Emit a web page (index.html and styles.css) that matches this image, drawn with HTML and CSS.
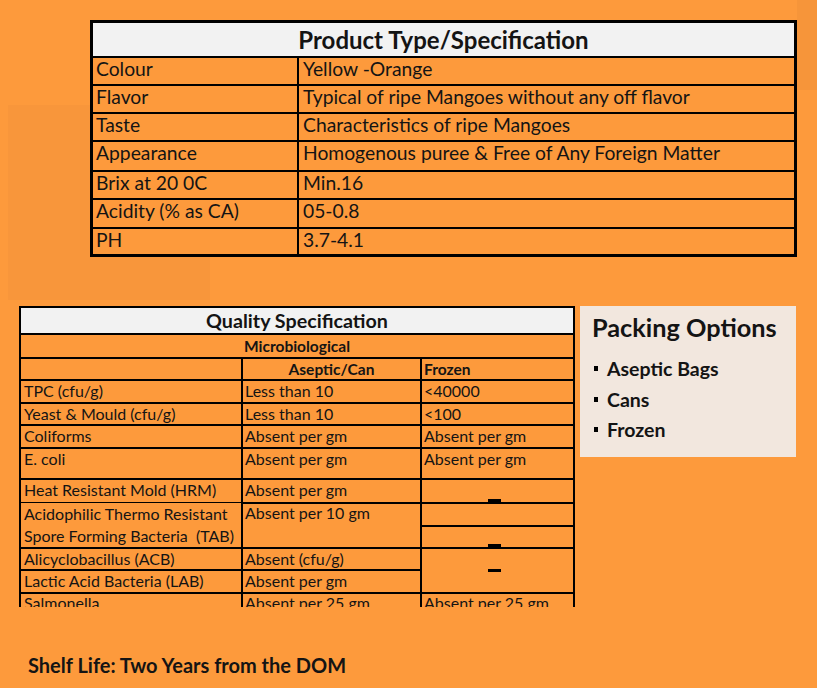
FILE: index.html
```html
<!DOCTYPE html>
<html lang="en">
<head>
<meta charset="utf-8">
<title>Mango Puree Specification</title>
<link rel="stylesheet" href="styles.css">
</head>
<body>
<div class="page">
  <div class="spec">
    <div class="spec-title">Product Type/Specification</div>
    <div class="spec-cell">Colour</div><div class="spec-cell spec-val">Yellow -Orange</div>
    <div class="spec-cell">Flavor</div><div class="spec-cell spec-val">Typical of ripe Mangoes without any off flavor</div>
    <div class="spec-cell">Taste</div><div class="spec-cell spec-val">Characteristics of ripe Mangoes</div>
    <div class="spec-cell">Appearance</div><div class="spec-cell spec-val">Homogenous puree &amp; Free of Any Foreign Matter</div>
    <div class="spec-cell">Brix at 20 0C</div><div class="spec-cell spec-val">Min.16</div>
    <div class="spec-cell">Acidity (% as CA)</div><div class="spec-cell spec-val">05-0.8</div>
    <div class="spec-cell">PH</div><div class="spec-cell spec-val">3.7-4.1</div>
  </div>

  <div class="middle">
    <div class="quality-clip">
      <div class="quality">
        <div class="q-title">Quality Specification</div>
        <div class="q-sub">Microbiological</div>
        <div class="q"></div><div class="q q-head q-center">Aseptic/Can</div><div class="q q-head q-c3">Frozen</div>

        <div class="q">TPC (cfu/g)</div><div class="q q-c2">Less than 10</div><div class="q q-c3">&lt;40000</div>
        <div class="q">Yeast &amp; Mould (cfu/g)</div><div class="q q-c2">Less than 10</div><div class="q q-c3">&lt;100</div>
        <div class="q">Coliforms</div><div class="q q-c2">Absent per gm</div><div class="q q-c3">Absent per gm</div>
        <div class="q">E. coli</div><div class="q q-c2">Absent per gm</div><div class="q q-c3">Absent per gm</div>
        <div class="q">Heat Resistant Mold (HRM)</div><div class="q q-c2">Absent per gm</div><div class="q q-dash q-dash-bottom"><span class="dash"></span></div>
        <div class="q q-span2 q-two">Acidophilic Thermo Resistant Spore Forming Bacteria&nbsp; (TAB)</div><div class="q q-c2 q-span2 q-up">Absent per 10 gm</div><div class="q"></div>
        <div class="q q-dash q-dash-bottom"><span class="dash"></span></div>
        <div class="q">Alicyclobacillus (ACB)</div><div class="q q-c2">Absent (cfu/g)</div><div class="q q-span2 q-dash q-dash-mid"><span class="dash"></span></div>
        <div class="q">Lactic Acid Bacteria (LAB)</div><div class="q q-c2">Absent per gm</div>
        <div class="q q-last">Salmonella</div><div class="q q-c2 q-last">Absent per 25 gm</div><div class="q q-c3 q-last">Absent per 25 gm</div>
      </div>
    </div>

    <div class="packing">
      <h2 class="packing-title">Packing Options</h2>
      <ul class="packing-list">
        <li>Aseptic Bags</li>
        <li>Cans</li>
        <li>Frozen</li>
      </ul>
    </div>
  </div>

  <p class="shelf">Shelf Life: Two Years from the DOM</p>
</div>
</body>
</html>
```

FILE: styles.css
```css
* {
  box-sizing: border-box;
}

body {
  margin: 0;
  width: 817px;
  height: 688px;
  overflow: hidden;
  font-family: Lato, "Open Sans", sans-serif;
  color: #141414;
  background-color: #FD9A3C;
  background-image:
    linear-gradient(#F8963B, #F8963B),
    linear-gradient(#F6953A, #F6953A);
  background-size: 202px 195px, 20px 90px;
  background-position: 8px 105px, 797px 0;
  background-repeat: no-repeat;
}

.page {
  padding-top: 20px;
}

/* Product type / specification table */
.spec {
  margin-left: 90px;
  width: 707px;
  display: grid;
  grid-template-columns: 204px 1fr;
  grid-template-rows: 33px 26px 26px 26px 28px 26px 27px 25px;
  gap: 2px;
  background: #000;
  border: 3px solid #000;
}

.spec-title {
  grid-column: 1 / -1;
  background: #F2F2F2;
  font-weight: 700;
  font-size: 24px;
  line-height: 33px;
  text-align: center;
}

.spec-cell {
  background: #FD9A3C;
  font-size: 19.3px;
  line-height: 22px;
  padding-left: 3px;
  white-space: nowrap;
}

.spec-val {
  padding-left: 4px;
}

/* Middle section */
.middle {
  display: flex;
  align-items: flex-start;
  gap: 5px;
  margin-top: 49px;
  margin-left: 19px;
}

.quality-clip {
  width: 556px;
  height: 301px;
  overflow: hidden;
  flex: none;
}

.quality {
  display: grid;
  grid-template-columns: 220px 177px 151px;
  grid-template-rows: 25px 22px 20px 21px 20px 21px 29px 22px 21px 20px 20px 21px 22px;
  gap: 2px;
  padding: 2px;
  background: #000;
}

.q-title {
  grid-column: 1 / -1;
  background: #F2F2F2;
  font-weight: 700;
  font-size: 19.7px;
  line-height: 25px;
  text-align: center;
}

.q-sub {
  grid-column: 1 / -1;
  background: #FD9A3C;
  font-weight: 700;
  font-size: 15.5px;
  line-height: 22px;
  text-align: center;
}

.q {
  background: #FD9A3C;
  font-size: 16px;
  line-height: 20px;
  padding-left: 3px;
  white-space: nowrap;
}

.q-c2,
.q-c3 {
  padding-left: 2px;
}

.q-head {
  font-weight: 700;
  font-size: 15.5px;
}

.q-center {
  text-align: center;
  padding-left: 0;
}

.q-span2 {
  grid-row: span 2;
}

.q-two {
  white-space: normal;
  line-height: 22px;
  margin-top: -1px;
}

.q-up {
  line-height: 18px;
}

.q-last {
  line-height: 17px;
}

.q-dash {
  display: flex;
  justify-content: center;
  padding-left: 0;
}

.q-dash-bottom {
  align-items: flex-end;
}

.q-dash-mid {
  align-items: center;
}

.dash {
  display: block;
  width: 13px;
  height: 3px;
  margin-left: -6px;
  background: #000;
}

/* Packing options */
.packing {
  width: 216px;
  height: 151px;
  flex: none;
  background: #F2E7DE;
  padding: 6px 0 0 12px;
}

.packing-title {
  margin: 0;
  font-size: 25.3px;
  font-weight: 700;
  line-height: 30px;
}

.packing-list {
  list-style: none;
  margin: 12px 0 0;
  padding: 0;
}

.packing-list li {
  position: relative;
  padding-left: 15px;
  font-size: 19.5px;
  font-weight: 700;
  line-height: 30.5px;
}

.packing-list li::before {
  content: "";
  position: absolute;
  left: 2px;
  top: 12px;
  width: 4px;
  height: 5px;
  background: #000;
}

/* Shelf life */
.shelf {
  margin: 46px 0 0;
  padding-left: 28px;
  font-size: 20px;
  font-weight: 700;
  line-height: 24px;
}
```
